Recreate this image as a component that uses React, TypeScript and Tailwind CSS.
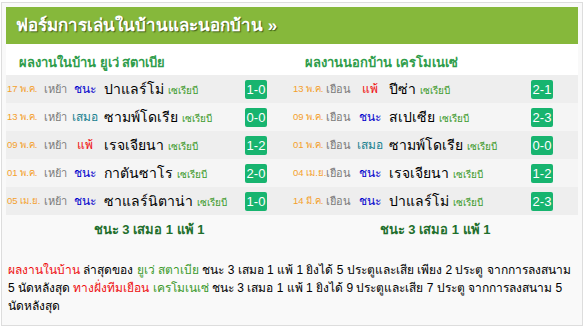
import React from 'react';

type Match = {
  date: string;
  venue: string;
  result: 'ชนะ' | 'เสมอ' | 'แพ้';
  team: string;
  score: string;
};

const homeMatches: Match[] = [
  { date: '17 พ.ค.', venue: 'เหย้า', result: 'ชนะ', team: 'ปาแลร์โม่', score: '1-0' },
  { date: '13 พ.ค.', venue: 'เหย้า', result: 'เสมอ', team: 'ซามพ์โดเรีย', score: '0-0' },
  { date: '09 พ.ค.', venue: 'เหย้า', result: 'แพ้', team: 'เรจเจียนา', score: '1-2' },
  { date: '01 พ.ค.', venue: 'เหย้า', result: 'ชนะ', team: 'กาตันซาโร', score: '2-0' },
  { date: '05 เม.ย.', venue: 'เหย้า', result: 'ชนะ', team: 'ซาแลร์นิตาน่า', score: '1-0' },
];

const awayMatches: Match[] = [
  { date: '13 พ.ค.', venue: 'เยือน', result: 'แพ้', team: 'ปีซ่า', score: '2-1' },
  { date: '09 พ.ค.', venue: 'เยือน', result: 'ชนะ', team: 'สเปเซีย', score: '2-3' },
  { date: '01 พ.ค.', venue: 'เยือน', result: 'เสมอ', team: 'ซามพ์โดเรีย', score: '0-0' },
  { date: '04 เม.ย.', venue: 'เยือน', result: 'ชนะ', team: 'เรจเจียนา', score: '1-2' },
  { date: '14 มี.ค.', venue: 'เยือน', result: 'ชนะ', team: 'ปาแลร์โม่', score: '2-3' },
];

const resultColor = (r: Match['result']) => {
  switch (r) {
    case 'ชนะ': return 'text-[#0000cc]';
    case 'เสมอ': return 'text-[#17808f]';
    default: return 'text-[#ee1111]';
  }
};

// home และ away ใช้ความกว้างช่องต่างกันเล็กน้อยเหมือนตารางต้นฉบับ
const FormColumn: React.FC<{ title: string; matches: Match[]; away?: boolean }> = ({ title, matches, away }) => (
  <div className="flex-1 flex flex-col">
    <div className="h-[31px] flex items-center pl-[13px] pt-[7px] bg-white text-[13px] font-bold text-[#2f9d4b]">{title}</div>
    {matches.map((m, i) => (
      <div key={i} className={`h-[28px] flex items-center ${i % 2 === 0 ? 'bg-[#eeeeee]' : 'bg-[#f5f5f5]'}`}>
        <span className={`${away ? 'w-[34px]' : 'w-[38px]'} shrink-0 pl-px text-[9.5px] text-[#f4a02c] whitespace-nowrap`}>{m.date}</span>
        <span className={`${away ? 'w-[26px]' : 'w-[23px]'} shrink-0 text-[11px] text-[#7a7a7a] whitespace-nowrap`}>{m.venue}</span>
        <span className={`w-[35px] shrink-0 text-center text-[12px] ${resultColor(m.result)}`}>{m.result}</span>
        <span className="flex-1 pl-[2px] whitespace-nowrap text-[14px] text-black">
          {m.team} <span className="text-[10px] text-[#3b9a2b]">เซเรียบี</span>
        </span>
        <span className="w-[47px] shrink-0">
          <span className="inline-flex w-[22px] h-[19px] items-center justify-center rounded-[2px] bg-[#17b46f] text-white text-[13px]">
            {m.score}
          </span>
        </span>
      </div>
    ))}
    <div className="h-[29px] flex items-center justify-center text-[13px] font-bold text-[#1f6f2c]">
      ชนะ 3 เสมอ 1 แพ้ 1
    </div>
  </div>
);

const App: React.FC = () => {
  return (
    <div className="w-[584px] h-[327px] bg-white pt-[2px] px-[1px] font-['Tahoma','Liberation_Sans',sans-serif]">
      <div className="h-[324px] border border-[#dddddd] bg-[#f9f9f9] p-1">
        <div className="h-[37px] bg-[#86b83b] flex items-center pl-[10px]">
          <h2 className="text-white text-[17px] font-bold [text-shadow:1px_1px_1px_#3f5f1a]">
            ฟอร์มการเล่นในบ้านและนอกบ้าน »
          </h2>
        </div>
        <div className="flex">
          <FormColumn title="ผลงานในบ้าน ยูเว่ สตาเบีย" matches={homeMatches} />
          <FormColumn title="ผลงานนอกบ้าน เครโมเนเซ่" matches={awayMatches} away />
        </div>
        <p className="mt-[17px] text-[12px] leading-[18px] text-black pl-[2px] pr-1">
          <span className="text-[#ee1111]">ผลงานในบ้าน</span> ล่าสุดของ{' '}
          <span className="text-[#3b9a2b]">ยูเว่ สตาเบีย</span> ชนะ 3 เสมอ 1 แพ้ 1 ยิงได้ 5 ประตูและเสีย เพียง 2 ประตู จากการลงสนาม 5 นัดหลังสุด{' '}
          <span className="text-[#ee1111]">ทางฝั่งทีมเยือน</span>{' '}
          <span className="text-[#3b9a2b]">เครโมเนเซ่</span> ชนะ 3 เสมอ 1 แพ้ 1 ยิงได้ 9 ประตูและเสีย 7 ประตู จากการลงสนาม 5 นัดหลังสุด
        </p>
      </div>
    </div>
  );
};

export default App;
